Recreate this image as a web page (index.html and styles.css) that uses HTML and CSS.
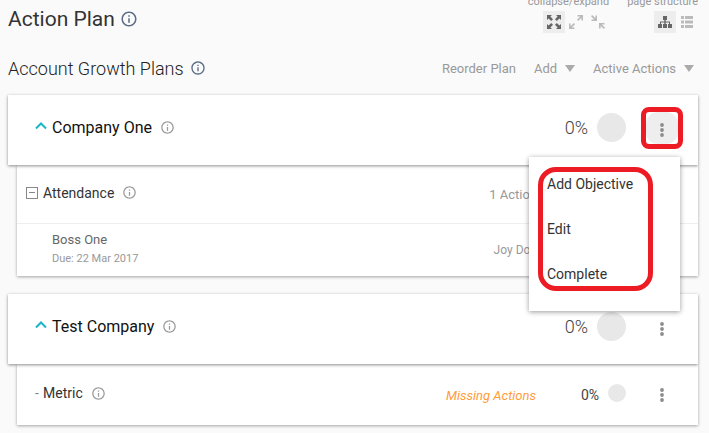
FILE: index.html
```html
<!DOCTYPE html>
<html lang="en">
<head>
    <meta charset="UTF-8">
    <meta name="viewport" content="width=device-width, initial-scale=1.0">
    <title>Action Plan</title>
    <link rel="stylesheet" href="styles.css">
</head>
<body>
    <!-- Shared icons -->
    <svg class="sprite" aria-hidden="true">
        <symbol id="icon-info" viewBox="0 0 24 24">
            <path fill="currentColor" d="M11 17h2v-6h-2v6zm1-15C6.48 2 2 6.48 2 12s4.480 10 10 10 10-4.480 10-10S17.520 2 12 2zm0 18c-4.410 0-8-3.590-8-8s3.590-8 8-8 8 3.590 8 8-3.590 8-8 8zM11 9h2V7h-2v2z"/>
        </symbol>
        <symbol id="icon-dots" viewBox="0 0 4 14">
            <g fill="currentColor"><circle cx="2" cy="2" r="1.9"/><circle cx="2" cy="7" r="1.9"/><circle cx="2" cy="12" r="1.9"/></g>
        </symbol>
        <symbol id="icon-up" viewBox="0 0 12 8">
            <path d="M1 6.500L6 1.500l5 5" fill="none" stroke="currentColor" stroke-width="2"/>
        </symbol>
    </svg>

    <header class="page-header">
        <h1>Action Plan <svg class="info info-large"><use href="#icon-info"/></svg></h1>
        <div class="toolbar">
            <div class="tool-group">
                <span class="tool-label">collapse/expand</span>
                <div class="tools">
                    <button class="tool active" aria-label="Expand all">
                        <svg viewBox="0 0 14 14"><path d="M0 0h5L3.400 1.600 6 4.200 4.200 6 1.600 3.400 0 5zM14 0v5l-1.600-1.600L9.800 6 8 4.200l2.600-2.600L9 0zM0 14V9l1.600 1.600L4.200 8 6 9.800l-2.600 2.600L5 14zM14 14H9l1.600-1.600L8 9.800 9.800 8l2.600 2.600L14 9z"/></svg>
                    </button>
                    <button class="tool" aria-label="Expand">
                        <svg viewBox="0 0 14 14"><path d="M8.500 0H14v5.500h-1.600V2.800L9.200 6 8 4.800l3.200-3.200H8.500zM0 8.500h1.600v2.700L4.800 8 6 9.200l-3.200 3.200h2.700V14H0z"/></svg>
                    </button>
                    <button class="tool" aria-label="Collapse">
                        <svg viewBox="0 0 14 14"><path d="M1.200 0l3.200 3.200V.5H6V6H.5V4.400h2.700L0 1.200zM8 8h5.500v1.600h-2.700l3.200 3.200-1.200 1.200-3.200-3.200v2.700H8z"/></svg>
                    </button>
                </div>
            </div>
            <div class="tool-group">
                <span class="tool-label">page structure</span>
                <div class="tools">
                    <button class="tool active" aria-label="Tree view">
                        <svg viewBox="0 0 14 14"><path d="M5 1h4v4H7.700v1.500H12V9h2v4h-4V9h1V7.600H7.700V9H9v4H5V9h1.300V7.600H3V9h1v4H0V9h2V6.500h4.300V5H5z"/></svg>
                    </button>
                    <button class="tool" aria-label="List view">
                        <svg viewBox="0 0 14 14"><path d="M1 1h3v3H1zM5 1h8v3H5zM1 5.500h3v3H1zM5 5.500h8v3H5zM1 10h3v3H1zM5 10h8v3H5z"/></svg>
                    </button>
                </div>
            </div>
        </div>
    </header>

    <div class="section-header">
        <h2>Account Growth Plans <svg class="info info-medium"><use href="#icon-info"/></svg></h2>
        <div class="actions">
            <button class="link-button">Reorder Plan</button>
            <div class="dropdown">
                <select aria-label="Add">
                    <option>Add</option>
                </select>
            </div>
            <div class="dropdown">
                <select aria-label="Filter actions">
                    <option>Active Actions</option>
                </select>
            </div>
        </div>
    </div>

    <main>
        <section class="plan">
            <div class="card">
                <button class="toggle" aria-label="Collapse Company One"><svg><use href="#icon-up"/></svg></button>
                <h3>Company One</h3>
                <svg class="info"><use href="#icon-info"/></svg>
                <span class="percent">0%</span>
                <span class="progress"></span>
                <div class="menu-wrap">
                    <button class="more open" aria-label="More"><svg><use href="#icon-dots"/></svg></button>
                    <span class="mark mark-button"></span>
                    <div class="menu">
                        <button>Add Objective</button>
                        <button>Edit</button>
                        <button>Complete</button>
                        <span class="mark mark-menu"></span>
                    </div>
                </div>
            </div>
            <div class="children">
                <div class="row">
                    <button class="box" aria-label="Collapse Attendance"></button>
                    <h4>Attendance</h4>
                    <svg class="info"><use href="#icon-info"/></svg>
                    <span class="status">1 Action</span>
                </div>
                <div class="row task">
                    <div>
                        <p class="task-name">Boss One</p>
                        <p class="task-due">Due: 22 Mar 2017</p>
                    </div>
                    <span class="status owner">Joy Don</span>
                </div>
            </div>
        </section>

        <section class="plan">
            <div class="card">
                <button class="toggle" aria-label="Collapse Test Company"><svg><use href="#icon-up"/></svg></button>
                <h3>Test Company</h3>
                <svg class="info"><use href="#icon-info"/></svg>
                <span class="percent">0%</span>
                <span class="progress"></span>
                <button class="more" aria-label="More"><svg><use href="#icon-dots"/></svg></button>
            </div>
            <div class="children">
                <div class="row metric">
                    <span class="dash">-</span>
                    <h4>Metric</h4>
                    <svg class="info"><use href="#icon-info"/></svg>
                    <span class="status missing">Missing Actions</span>
                    <span class="percent">0%</span>
                    <span class="progress"></span>
                    <button class="more" aria-label="More"><svg><use href="#icon-dots"/></svg></button>
                </div>
            </div>
        </section>
    </main>
</body>
</html>
```
FILE: styles.css
```css
* {
    box-sizing: border-box;
}
body {
    margin: 0;
    padding: 0 11px 8px 8px;
    background: #fafafa;
    color: #333;
    font-family: Roboto, "Liberation Sans", sans-serif;
    font-size: 14px;
}
h1, h2, h3, h4, p {
    margin: 0;
    font-weight: 400;
}
button, select {
    margin: 0;
    padding: 0;
    border: none;
    background: none;
    color: inherit;
    font: inherit;
    cursor: pointer;
}
svg {
    display: block;
    flex: none;
}
.sprite {
    position: absolute;
    width: 0;
    height: 0;
}
.info {
    width: 15px;
    height: 15px;
    margin-left: 8px;
    color: #999;
}
.info-large {
    width: 18px;
    height: 18px;
    margin-left: 5px;
    color: #5b6b85;
}
.info-medium {
    width: 16px;
    height: 16px;
    margin-left: 6px;
    color: #5b6b85;
}

/* Header */
.page-header {
    display: flex;
    justify-content: space-between;
    height: 44px;
}
h1 {
    display: flex;
    align-items: center;
    height: 38px;
    font-size: 21px;
}
.toolbar {
    display: flex;
    gap: 18px;
    margin-top: -5px;
    color: #999;
}
.tool-group {
    display: flex;
    flex-direction: column;
    align-items: flex-end;
}
.tool-label {
    font-size: 11px;
    line-height: 13px;
}
.tools {
    display: flex;
    margin-top: 3px;
}
.tool {
    display: flex;
    align-items: center;
    justify-content: center;
    width: 22px;
    height: 22px;
    color: #bbb;
}
.tool svg {
    width: 14px;
    height: 14px;
    fill: currentColor;
}
.tool.active {
    background: #ededed;
    color: #666;
}

.section-header {
    display: flex;
    align-items: center;
    justify-content: space-between;
    height: 48px;
    margin-bottom: 3px;
}
h2 {
    display: flex;
    align-items: center;
    color: #222;
    font-size: 18px;
    font-weight: 300;
}
.actions {
    display: flex;
    gap: 18px;
    padding-right: 4px;
    color: #999;
    font-size: 13px;
}
.dropdown {
    position: relative;
}
.dropdown select {
    appearance: none;
    padding-right: 17px;
}
.dropdown::after {
    content: "";
    position: absolute;
    top: 4px;
    right: 0;
    border: 5px solid transparent;
    border-top: 7px solid #aaa;
    border-bottom: none;
    pointer-events: none;
}

/* Plans */
.plan {
    margin-bottom: 18px;
}
.plan:last-child {
    margin-bottom: 0;
}
.card {
    position: relative;
    z-index: 1;
    display: flex;
    align-items: center;
    height: 70px;
    padding: 0 20px 5px 27px;
    background: #fff;
    box-shadow: 0 1px 3px rgba(0, 0, 0, 0.45);
}
.plan:first-child .card {
    z-index: 2;
}
.toggle {
    width: 12px;
    margin-right: 5px;
    padding-bottom: 4px;
    color: #19b5c6;
}
.toggle svg {
    width: 12px;
    height: 8px;
}
h3 {
    color: #111;
    font-size: 16px;
}
.percent {
    margin-left: auto;
    color: #444;
    font-size: 18px;
    font-weight: 300;
}
.progress {
    width: 29px;
    height: 29px;
    margin: 0 20px 0 9px;
    border-radius: 50%;
    background: #e8e8e8;
}
.more {
    display: flex;
    align-items: center;
    justify-content: center;
    width: 32px;
    height: 32px;
    padding-top: 4px;
    border-radius: 50%;
    color: #8c8c8c;
}
.more svg {
    width: 4px;
    height: 14px;
}
.more.open {
    border-radius: 12px;
    background: #eee;
}
.children {
    margin-left: 9px;
    background: #fff;
    box-shadow: 0 1px 3px rgba(0, 0, 0, 0.35);
}
.row {
    display: flex;
    align-items: center;
    min-height: 58px;
    padding: 0 20px 3px 9px;
}
.metric {
    min-height: 61px;
}
h4 {
    font-size: 14px;
}
.box {
    width: 12px;
    height: 12px;
    margin-right: 5px;
    border: 1px solid #888;
    background: linear-gradient(#888, #888) center / 6px 1px no-repeat;
}
.dash {
    width: 8px;
    margin-left: 9px;
    color: #888;
}
.status {
    margin-left: auto;
    margin-right: 141px;
    padding-top: 4px;
    color: #999;
    font-size: 13px;
}
.row .percent {
    width: 63px;
    margin-left: 0;
    padding-top: 4px;
    font-size: 14px;
    font-weight: 400;
    text-align: right;
}
.row .progress {
    width: 18px;
    height: 18px;
}
.status.missing {
    margin-right: 0;
    color: #ff9c38;
    font-style: italic;
}
.task {
    min-height: 53px;
    padding-left: 35px;
    padding-bottom: 1px;
    border-top: 1px solid #eee;
}
.task-name {
    color: #666;
    font-size: 13px;
    line-height: 18px;
}
.task-due {
    padding-top: 1px;
    color: #999;
    font-size: 11px;
    line-height: 18px;
}
.status.owner {
    padding-top: 0;
    font-size: 12px;
}

/* Drop-down menu */
.menu-wrap {
    position: relative;
}
.menu {
    position: absolute;
    top: 45px;
    right: -2px;
    width: 151px;
    padding: 5px 0 14px;
    background: #fff;
    box-shadow: 0 1px 5px rgba(0, 0, 0, 0.4);
}
.menu button {
    display: block;
    width: 100%;
    height: 45px;
    padding-left: 18px;
    text-align: left;
}
.mark {
    position: absolute;
    border: 5px solid #ed1c24;
    pointer-events: none;
}
.mark-button {
    inset: -5px;
    border-radius: 8px;
}
.mark-menu {
    inset: 10px 27px 20px 9px;
    border-radius: 18px;
}
```
